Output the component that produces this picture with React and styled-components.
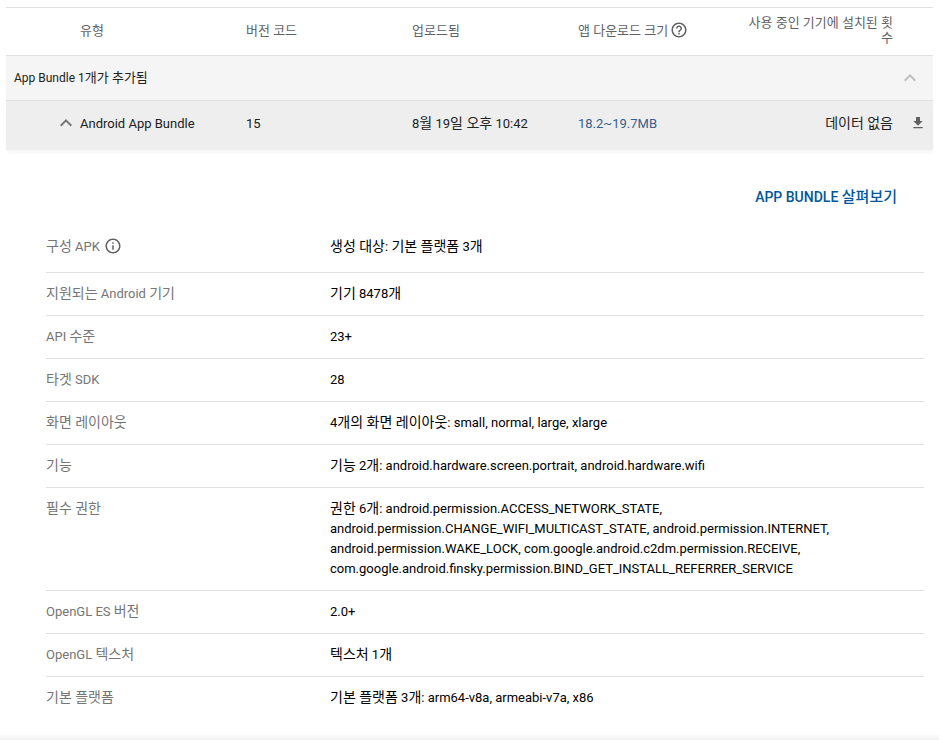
import React from 'react';
import styled, { createGlobalStyle } from 'styled-components';

const GlobalStyle = createGlobalStyle`
  html, body {
    margin: 0;
    padding: 0;
    background: #fff;
    overflow: hidden;
  }
  body {
    font-family: Roboto, "Noto Sans CJK KR", sans-serif;
    font-size: 13px;
    color: #212121;
  }
`;

// table
const Page = styled.div`
  width: 939px;
  height: 740px;
  padding: 7px 6px 0;
  box-sizing: border-box;
  overflow: hidden;
`;

const Columns = styled.div`
  display: grid;
  grid-template-columns: 74px 166px 166px 166px 165px 150px 40px;
  align-items: center;
  box-sizing: border-box;
`;

const HeadRow = styled(Columns)`
  height: 49px;
  padding-bottom: 4px;
  border-top: 1px solid #e0e0e0;
  border-bottom: 1px solid #e0e0e0;
  color: #5f6368;
`;

const HeadCell = styled.div`
  display: flex;
  align-items: center;
  gap: 2px;
  grid-column: ${(p) => p.$col};
`;

const HeadRight = styled.div`
  grid-column: 6;
  text-align: right;
  line-height: 15px;
`;

const GroupRow = styled.div`
  height: 45px;
  box-sizing: border-box;
  display: flex;
  align-items: center;
  justify-content: space-between;
  padding: 0 11px 1px 8px;
  background: #f5f5f5;
  border-bottom: 1px solid #e0e0e0;
  font-size: 12px;
`;

const BundleRow = styled(Columns)`
  height: 49px;
  padding-bottom: 5px;
  background: #eeeeee;
  box-shadow: 0 3px 4px -1px rgba(0, 0, 0, 0.05);
`;

const NameCell = styled.div`
  grid-column: 1 / span 2;
  display: flex;
  align-items: center;
  padding-left: 48px;
  gap: 2px;
`;

const Cell = styled.div`
  color: ${(p) => p.$color || 'inherit'};
`;

const NoData = styled.div`
  text-align: right;
`;

const DownloadCell = styled.div`
  display: flex;
  justify-content: flex-end;
  padding-right: 7px;
`;

const Details = styled.div`
  padding: 0 9px 0 40px;
`;

const LinkRow = styled.div`
  display: flex;
  justify-content: flex-end;
  padding: 38px 27px 0 0;
  height: 68px;
  box-sizing: border-box;
`;

const ExploreLink = styled.a`
  color: #01579b;
  font-weight: 500;
  font-size: 14px;
  line-height: 18px;
`;

const SpecRow = styled.div`
  display: grid;
  grid-template-columns: 284px 1fr;
  padding: ${(p) => (p.$first ? '19px 0 15px' : '11px 0 11px')};
  line-height: 20px;
  & + & {
    border-top: 1px solid #e0e0e0;
  }
`;

const SpecLabel = styled.div`
  display: flex;
  align-items: flex-start;
  gap: 4px;
  color: #757575;
`;

const LabelText = styled.span``;

const SpecValue = styled.div`
  color: #000;
  width: 510px;
`;

const Ko = styled.span`
  font-size: ${(p) => p.$size || 14}px;
  line-height: 1;
`;

const BottomEdge = styled.div`
  height: 5px;
  margin: 16px -6px 0;
  background: linear-gradient(#fbfbfb, #f2f2f2);
`;

// 한글 구간만 조금 크게 (the reference's Korean font runs wider than its Latin one)
const Mixed = ({ text, size }) =>
  text.split(/([\uAC00-\uD7A3]+(?: [\uAC00-\uD7A3]+)*)/).map((part, i) =>
    i % 2 === 1 ? (
      <Ko key={i} $size={size}>
        {part}
      </Ko>
    ) : (
      part
    )
  );

const Chevron = ({ color }) => (
  <svg width="24" height="24" viewBox="0 0 24 24" fill={color}>
    <path d="M12 8l-6 6 1.41 1.41L12 10.83l4.59 4.58L18 14z" />
  </svg>
);

const HelpIcon = () => (
  <svg width="18" height="18" viewBox="0 0 24 24" fill="#616161">
    <path d="M11 18h2v-2h-2v2zm1-16C6.48 2 2 6.48 2 12s4.48 10 10 10 10-4.48 10-10S17.52 2 12 2zm0 18c-4.41 0-8-3.59-8-8s3.59-8 8-8 8 3.59 8 8-3.59 8-8 8zm0-14c-2.21 0-4 1.79-4 4h2c0-1.1.9-2 2-2s2 .9 2 2c0 2-3 1.75-3 5h2c0-2.25 3-2.5 3-5 0-2.21-1.79-4-4-4z" />
  </svg>
);

const InfoIcon = () => (
  <svg width="18" height="18" viewBox="0 0 24 24" fill="#616161">
    <path d="M11 7h2v2h-2zm0 4h2v6h-2zm1-9C6.48 2 2 6.48 2 12s4.48 10 10 10 10-4.48 10-10S17.52 2 12 2zm0 18c-4.41 0-8-3.59-8-8s3.59-8 8-8 8 3.59 8 8-3.59 8-8 8z" />
  </svg>
);

const DownloadIcon = () => (
  <svg width="16" height="16" viewBox="0 0 24 24" fill="#616161">
    <path d="M19 9h-4V3H9v6H5l7 7 7-7zM5 18v2h14v-2H5z" />
  </svg>
);

const specs = [
  { label: '지원되는 Android 기기', value: '기기 8478개' },
  { label: 'API 수준', value: '23+' },
  { label: '타겟 SDK', value: '28' },
  { label: '화면 레이아웃', value: '4개의 화면 레이아웃: small, normal, large, xlarge' },
  { label: '기능', value: '기능 2개: android.hardware.screen.portrait, android.hardware.wifi' },
  {
    label: '필수 권한',
    value:
      '권한 6개: android.permission.ACCESS_NETWORK_STATE, android.permission.CHANGE_WIFI_MULTICAST_STATE, android.permission.INTERNET, android.permission.WAKE_LOCK, com.google.android.c2dm.permission.RECEIVE, com.google.android.finsky.permission.BIND_GET_INSTALL_REFERRER_SERVICE',
  },
  { label: 'OpenGL ES 버전', value: '2.0+' },
  { label: 'OpenGL 텍스처', value: '텍스처 1개' },
  { label: '기본 플랫폼', value: '기본 플랫폼 3개: arm64-v8a, armeabi-v7a, x86' },
];

const App = () => {
  return (
    <Page>
      <GlobalStyle />
      <HeadRow>
        <HeadCell $col={2}>유형</HeadCell>
        <HeadCell $col={3}>버전 코드</HeadCell>
        <HeadCell $col={4}>업로드됨</HeadCell>
        <HeadCell $col={5}>
          앱 다운로드 크기 <HelpIcon />
        </HeadCell>
        <HeadRight>사용 중인 기기에 설치된 횟수</HeadRight>
      </HeadRow>

      <GroupRow>
        <span>
          <Mixed text="App Bundle 1개가 추가됨" size={13} />
        </span>
        <Chevron color="#bdbdbd" />
      </GroupRow>

      <BundleRow>
        <NameCell>
          <Chevron color="#757575" />
          Android App Bundle
        </NameCell>
        <Cell>15</Cell>
        <Cell>
          <Mixed text="8월 19일 오후 10:42" />
        </Cell>
        <Cell $color="#37608c">18.2~19.7MB</Cell>
        <NoData>
          <Mixed text="데이터 없음" />
        </NoData>
        <DownloadCell>
          <DownloadIcon />
        </DownloadCell>
      </BundleRow>

      <Details>
        <LinkRow>
          <ExploreLink>
            <Mixed text="APP BUNDLE 살펴보기" size={15} />
          </ExploreLink>
        </LinkRow>
        <SpecRow $first>
          <SpecLabel>
            <LabelText>
              <Mixed text="구성 APK" />
            </LabelText>
            <InfoIcon />
          </SpecLabel>
          <SpecValue>
            <Mixed text="생성 대상: 기본 플랫폼 3개" />
          </SpecValue>
        </SpecRow>
        {specs.map((spec) => (
          <SpecRow key={spec.label}>
            <SpecLabel>
              <LabelText>
                <Mixed text={spec.label} />
              </LabelText>
            </SpecLabel>
            <SpecValue>
              <Mixed text={spec.value} />
            </SpecValue>
          </SpecRow>
        ))}
      </Details>
      <BottomEdge />
    </Page>
  );
};

export default App;
